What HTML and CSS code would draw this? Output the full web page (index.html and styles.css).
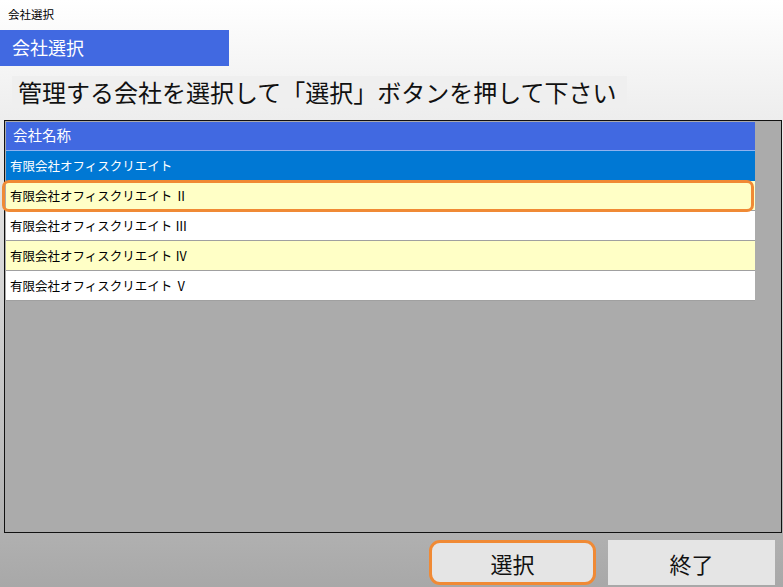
FILE: index.html
```html
<!DOCTYPE html>
<html lang="ja">
<head>
<meta charset="utf-8">
<link rel="stylesheet" href="styles.css">
</head>
<body>
<div class="window">
  <div class="caption">会社選択</div>
  <div class="titlebar">会社選択</div>
  <div class="instruction">管理する会社を選択して「選択」ボタンを押して下さい</div>
  <div class="grid">
    <div class="rows">
      <div class="row header">会社名称</div>
      <div class="row selected">有限会社オフィスクリエイト</div>
      <div class="row alt">有限会社オフィスクリエイト Ⅱ</div>
      <div class="row">有限会社オフィスクリエイト Ⅲ</div>
      <div class="row alt">有限会社オフィスクリエイト Ⅳ</div>
      <div class="row">有限会社オフィスクリエイト Ⅴ</div>
    </div>
    <div class="mark-row"></div>
  </div>
  <div class="footer">
    <button class="btn btn-select">選択</button>
    <button class="btn btn-end">終了</button>
  </div>
</div>
</body>
</html>
```
FILE: styles.css
```css
html, body {
  margin: 0;
  padding: 0;
}
body {
  width: 783px;
  height: 587px;
  overflow: hidden;
  font-family: "Noto Sans CJK JP", "Noto Sans", sans-serif;
  background: linear-gradient(to bottom, #ffffff 0px, #ededed 120px, #b0b0b0 535px, #a8a8a8 587px);
}
.window {
  display: flex;
  flex-direction: column;
  height: 587px;
}
.caption {
  height: 30px;
  padding-left: 8px;
  font-size: 11.5px;
  line-height: 28px;
  color: #000;
}
.titlebar {
  width: 217px;
  height: 36px;
  padding-left: 12px;
  background: #4169e1;
  color: #fff;
  font-size: 18px;
  line-height: 35px;
}
.instruction {
  align-self: flex-start;
  margin: 10px 0 0 12px;
  padding: 0 10px 0 6px;
  height: 32px;
  background: #efefef;
  font-size: 24px;
  line-height: 32px;
  color: #111;
}
.grid {
  position: relative;
  margin: 12px 0 0 4px;
  width: 775px;
  height: 410px;
  border: 1px solid #111;
  background: #ababab;
  padding: 1px 0 0 1px;
}
.rows {
  width: 749px;
  display: flex;
  flex-direction: column;
}
.row {
  height: 29px;
  border-bottom: 1px solid #a0a0a0;
  background: #fff;
  padding-left: 4px;
  font-size: 12.5px;
  line-height: 29px;
  color: #000;
}
.row.header {
  height: 28px;
  background: #4169e1;
  color: #fff;
  font-size: 14.5px;
  padding-left: 7px;
  line-height: 26px;
  border-bottom: 1px solid #8fb2f0;
}
.row.selected {
  background: #0078d4;
  color: #fff;
  border-bottom: none;
  height: 30px;
}
.row.alt {
  background: #ffffc6;
}
.mark-row {
  position: absolute;
  left: -3px;
  top: 59px;
  width: 746px;
  height: 26px;
  border: 3px solid #f08a35;
  border-radius: 7px;
}
.footer {
  display: flex;
  justify-content: flex-end;
  gap: 12px;
  padding: 7px 8px 0 0;
}
.btn {
  font-family: "Noto Sans CJK JP", "Noto Sans", sans-serif;
  font-size: 22px;
  color: #111;
  background: #e5e5e5;
  border: none;
  height: 45px;
  width: 167px;
  padding: 0;
  margin: 0;
}
.btn-select {
  width: 167px;
  border: 3px solid #f08a35;
  border-radius: 11px;
}
```
